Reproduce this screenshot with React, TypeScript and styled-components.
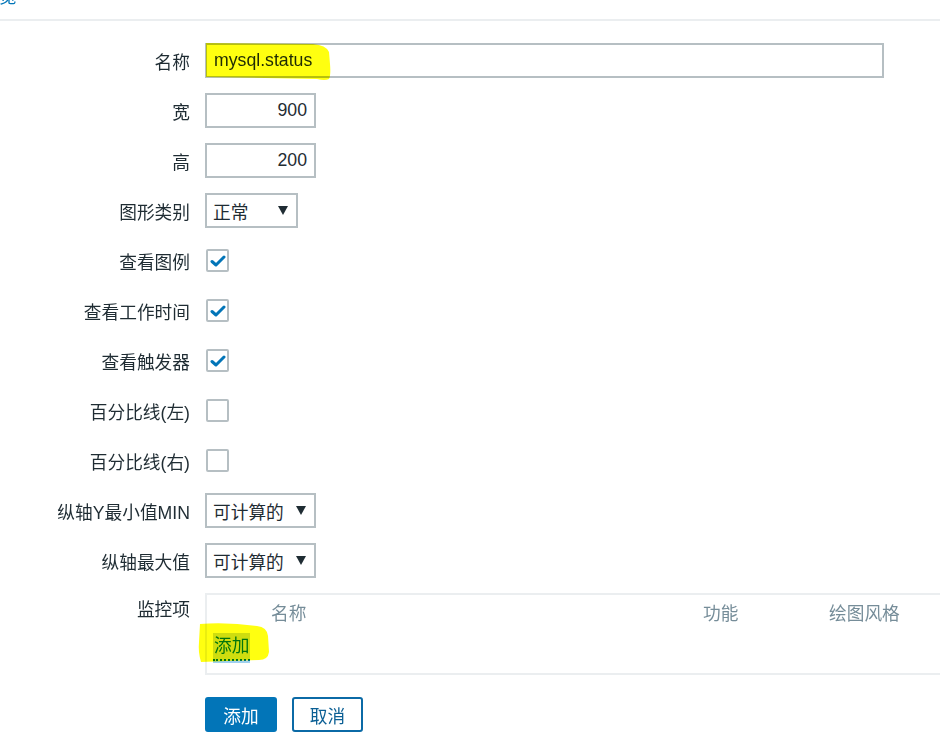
import React from "react";
import styled, { createGlobalStyle } from "styled-components";

const Global = createGlobalStyle`
  html, body { margin: 0; padding: 0; background: #fff; overflow: hidden; }
  body {
    font-family: "Liberation Sans", "Noto Sans CJK SC", sans-serif;
    font-size: 17.7px;
    color: #1f2c33;
  }
`;

const Page = styled.div`
  width: 940px;
  height: 742px;
  overflow: hidden;
`;

const TabBar = styled.div`
  height: 19px;
  border-bottom: 2px solid #ebeef0;
  overflow: hidden;
`;

const TabText = styled.span`
  display: block;
  margin-top: -13px;
  margin-left: -1px;
  line-height: 20px;
  color: #0275b8;
`;

const Form = styled.div`
  display: grid;
  grid-template-columns: 190px 1fr;
  column-gap: 15px;
  row-gap: 15px;
  grid-auto-rows: minmax(35px, auto);
  padding-top: 22px;
`;

const Label = styled.div<{ $top?: boolean }>`
  text-align: right;
  align-self: ${(p) => (p.$top ? "start" : "center")};
  line-height: ${(p) => (p.$top ? "35px" : "normal")};
  white-space: nowrap;
`;

const Field = styled.div`
  display: flex;
  align-items: center;
  position: relative;
`;

const TextBox = styled.div<{ $w: number; $right?: boolean }>`
  box-sizing: border-box;
  width: ${(p) => p.$w}px;
  height: 35px;
  border: 2px solid #b6bfc3;
  background: #fff;
  padding: 0 7px;
  display: flex;
  align-items: center;
  justify-content: ${(p) => (p.$right ? "flex-end" : "flex-start")};
  color: #1f2c33;
`;

const SelectBox = styled.div<{ $w: number }>`
  box-sizing: border-box;
  width: ${(p) => p.$w}px;
  height: 35px;
  border: 2px solid #b6bfc3;
  background: #fff;
  padding: 0 8px 0 6px;
  display: flex;
  align-items: center;
  justify-content: space-between;
`;

const Check = styled.div`
  box-sizing: border-box;
  width: 23px;
  height: 23px;
  border: 2px solid #b6bfc3;
  border-radius: 2px;
  background: #fff;
  display: flex;
  align-items: center;
  justify-content: center;
  margin-left: 1px;
`;

const Marker = styled.svg`
  position: absolute;
  pointer-events: none;
  mix-blend-mode: multiply;
`;

const Items = styled.div`
  box-sizing: border-box;
  width: 780px;
  height: 82px;
  border: 2px solid #ebeef0;
  border-right: none;
  position: relative;
`;

const HeadRow = styled.div`
  display: grid;
  grid-template-columns: 64px 432px 126px 1fr;
  height: 34px;
  align-items: center;
  color: #768d99;
`;

const AddRow = styled.div`
  height: 36px;
  display: flex;
  align-items: center;
  padding-left: 6px;
  position: relative;
`;

const AddLink = styled.span`
  color: #0275b8;
  background: #cfdde9;
  padding: 0 1px;
  line-height: 26px;
  border-bottom: 2px dotted #0275b8;
  box-shadow: 0 2px 0 #9fd0ef;
`;

const Buttons = styled.div`
  display: flex;
  gap: 15px;
  padding-top: 7px;
`;

const Btn = styled.div<{ $alt?: boolean }>`
  box-sizing: border-box;
  width: ${(p) => (p.$alt ? 71 : 72)}px;
  height: 35px;
  border-radius: 3px;
  display: flex;
  align-items: center;
  justify-content: center;
  background: ${(p) => (p.$alt ? "#fff" : "#0275b8")};
  color: ${(p) => (p.$alt ? "#0b5f94" : "#fff")};
  border: 2px solid ${(p) => (p.$alt ? "#0b6aa6" : "#0275b8")};
`;

const Arrow = () => (
  <svg width="10" height="9" viewBox="0 0 10 9">
    <path d="M0 0 H10 L5 9 Z" fill="#1f2c33" />
  </svg>
);

const Tick = () => (
  <svg width="16" height="14" viewBox="0 0 16 14">
    <path d="M2 7.5 L6 11 L14 3" fill="none" stroke="#0275b8" strokeWidth="3" strokeLinecap="round" strokeLinejoin="round" />
  </svg>
);

type Row =
  | { label: string; kind: "text"; value: string; w: number; right?: boolean }
  | { label: string; kind: "select"; value: string; w: number }
  | { label: string; kind: "check"; checked: boolean };

const rows: Row[] = [
  { label: "宽", kind: "text", value: "900", w: 111, right: true },
  { label: "高", kind: "text", value: "200", w: 111, right: true },
  { label: "图形类别", kind: "select", value: "正常", w: 93 },
  { label: "查看图例", kind: "check", checked: true },
  { label: "查看工作时间", kind: "check", checked: true },
  { label: "查看触发器", kind: "check", checked: true },
  { label: "百分比线(左)", kind: "check", checked: false },
  { label: "百分比线(右)", kind: "check", checked: false },
  { label: "纵轴Y最小值MIN", kind: "select", value: "可计算的", w: 111 },
  { label: "纵轴最大值", kind: "select", value: "可计算的", w: 111 },
];

export default function App() {
  return (
    <Page>
      <Global />
      <TabBar>
        <TabText>览</TabText>
      </TabBar>
      <Form>
        <Label>名称</Label>
        <Field>
          <TextBox $w={679}>mysql.status</TextBox>
          <Marker width="130" height="40" viewBox="0 0 130 40" style={{ left: 0, top: -1 }}>
            <path
              d="M1 1 L108 2 Q121 3 124 10 L125 22 Q126 33 124 37 Q120 39 112 37 L60 36 L1 35 Z"
              fill="#ffff10"
            />
          </Marker>
        </Field>
        {rows.map((r) => (
          <React.Fragment key={r.label}>
            <Label>{r.label}</Label>
            <Field>
              {r.kind === "text" && (
                <TextBox $w={r.w} $right={r.right}>
                  {r.value}
                </TextBox>
              )}
              {r.kind === "select" && (
                <SelectBox $w={r.w}>
                  <span>{r.value}</span>
                  <Arrow />
                </SelectBox>
              )}
              {r.kind === "check" && <Check>{r.checked && <Tick />}</Check>}
            </Field>
          </React.Fragment>
        ))}
        <Label $top>监控项</Label>
        <Field>
          <Items>
            <HeadRow>
              <span />
              <span>名称</span>
              <span>功能</span>
              <span>绘图风格</span>
            </HeadRow>
            <AddRow>
              <AddLink>添加</AddLink>
              <Marker width="76" height="42" viewBox="0 0 76 42" style={{ left: -10, top: -7 }}>
                <path
                  d="M3 2 Q30 0 60 4 Q70 5 71 14 L72 30 Q71 38 62 38 L30 39 L4 40 Q1 30 2 20 Z"
                  fill="#ffff10"
                />
              </Marker>
            </AddRow>
          </Items>
        </Field>
        <span />
        <Buttons>
          <Btn>添加</Btn>
          <Btn $alt>取消</Btn>
        </Buttons>
      </Form>
    </Page>
  );
}
